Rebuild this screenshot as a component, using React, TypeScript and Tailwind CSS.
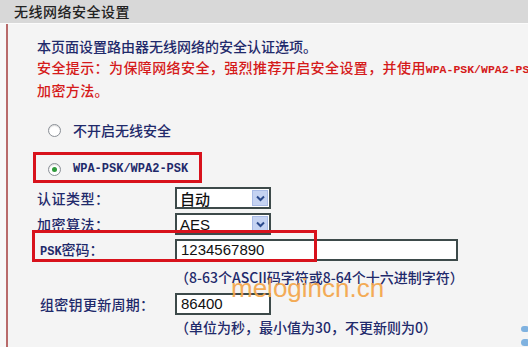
import React from "react";

const cjk = { fontFamily: '"Noto Sans CJK SC", "Noto Sans", sans-serif' };
const mono = { fontFamily: '"Liberation Mono", "Noto Sans CJK SC", monospace' };
const arial = { fontFamily: '"Liberation Sans", Arial, sans-serif' };

function Radio({ checked }: { checked?: boolean }) {
  return (
    <span className="flex h-[13px] w-[13px] items-center justify-center rounded-full border border-[#8a8f96] bg-white shadow-[inset_0_1px_1px_rgba(0,0,0,0.15)]">
      {checked && <span className="h-[5px] w-[5px] rounded-full bg-[#2e9a3a]" />}
    </span>
  );
}

function Select({ value }: { value: string }) {
  return (
    <div className="flex h-[22px] w-[96px] items-center justify-between border-2 border-[#3d4a4a] bg-white pl-[3px] pr-[1px]">
      <span className="text-[15px] leading-none text-[#111]" style={value === "AES" ? arial : cjk}>
        {value}
      </span>
      <span className="flex h-[16px] w-[16px] items-center justify-center bg-[#c5d3f2] border border-[#a9bbe6]">
        <svg width="9" height="7" viewBox="0 0 9 7">
          <path d="M1 1.5 L4.5 5 L8 1.5" fill="none" stroke="#2b4a8c" strokeWidth="2" />
        </svg>
      </span>
    </div>
  );
}

function Input({ value, width }: { value: string; width: string }) {
  return (
    <div
      className={`flex h-[22px] items-center border-2 border-[#3d4a4a] bg-white pl-[4px] text-[15px] text-[#111] ${width}`}
      style={arial}
    >
      {value}
    </div>
  );
}

export default function App() {
  return (
    <div className="relative h-[347px] w-[528px] overflow-hidden bg-[#f7f7f7] font-medium" style={cjk}>
      <div className="h-[23px] bg-[#d8d8d8] pl-[14px] text-[14px] leading-[23px] tracking-[0.5px] text-[#222]">
        无线网络安全设置
      </div>
      <div className="h-[1px] bg-[#fbfbfb]" />
      <div className="ml-[6px] h-[323px] border-l-2 border-[#b86a6a] bg-[#f4f4f4] pl-[29px] pt-[12px]">
        <div className="text-[14px] leading-[21px] whitespace-nowrap">
          <div className="text-[#1f2a6b]">本页面设置路由器无线网络的安全认证选项。</div>
          <div className="tracking-[0.4px] text-[#d51a1a]">
            安全提示：为保障网络安全，强烈推荐开启安全设置，并使用
            <span className="text-[11.5px] font-bold tracking-normal" style={mono}>
              WPA-PSK/WPA2-PSK
            </span>
          </div>
          <div className="tracking-[0.4px] text-[#d51a1a]">加密方法。</div>
        </div>

        <div className="mt-[19px] flex h-[20px] items-center pl-[11px]">
          <Radio />
          <span className="ml-[12px] text-[14px] text-[#1f2a6b]">不开启无线安全</span>
        </div>

        <div className="mt-[19px] flex h-[20px] items-center pl-[11px]">
          <Radio checked />
          <span className="ml-[12px] text-[12px] font-bold text-[#1f2a6b]" style={mono}>
            WPA-PSK/WPA2-PSK
          </span>
        </div>

        <div className="mt-[8px] flex items-center">
          <span className="w-[138px] text-[14px] tracking-[0.5px] text-[#1f2a6b]">认证类型：</span>
          <Select value="自动" />
        </div>
        <div className="mt-[4px] flex items-center">
          <span className="w-[138px] text-[14px] tracking-[0.5px] text-[#1f2a6b]">加密算法：</span>
          <Select value="AES" />
        </div>
        <div className="mt-[4px] flex items-center">
          <span className="w-[138px] pl-[3px] text-[14px] text-[#1f2a6b]">
            <span className="text-[12px] font-bold" style={mono}>PSK</span>密码：
          </span>
          <Input value="1234567890" width="w-[283px]" />
        </div>
        <div className="mt-[6px] h-[20px] pl-[138px] text-[14px] leading-[20px] text-[#1f2a6b] whitespace-nowrap">
          （8-63个ASCII码字符或8-64个十六进制字符）
        </div>
        <div className="mt-[6px] flex items-center">
          <span className="w-[138px] pl-[3px] text-[14px] tracking-[0.3px] text-[#1f2a6b]">组密钥更新周期：</span>
          <Input value="86400" width="w-[96px]" />
        </div>
        <div className="mt-[2px] h-[20px] pl-[138px] text-[14px] leading-[20px] text-[#1f2a6b] whitespace-nowrap">
          （单位为秒，最小值为30，不更新则为0）
        </div>
      </div>

      {/* annotation overlays */}
      <div className="absolute left-[33px] top-[152px] h-[31px] w-[169px] border-[3px] border-[#d8121c]" />
      <div className="absolute left-[32px] top-[230px] h-[32px] w-[285px] border-[3px] border-[#d8121c]" />
      <div
        className="absolute left-[231px] top-[273px] text-[26px] font-normal leading-[30px] text-[#f3a446] opacity-90"
        style={arial}
      >
        melogincn.cn
      </div>
      <div className="absolute left-[521px] top-[326px] h-[6px] w-[8px] rounded-full bg-[#7fb2e0]" />
      <div className="absolute left-[521px] top-[339px] h-[7px] w-[9px] rounded-full bg-[#7fb2e0]" />
    </div>
  );
}
